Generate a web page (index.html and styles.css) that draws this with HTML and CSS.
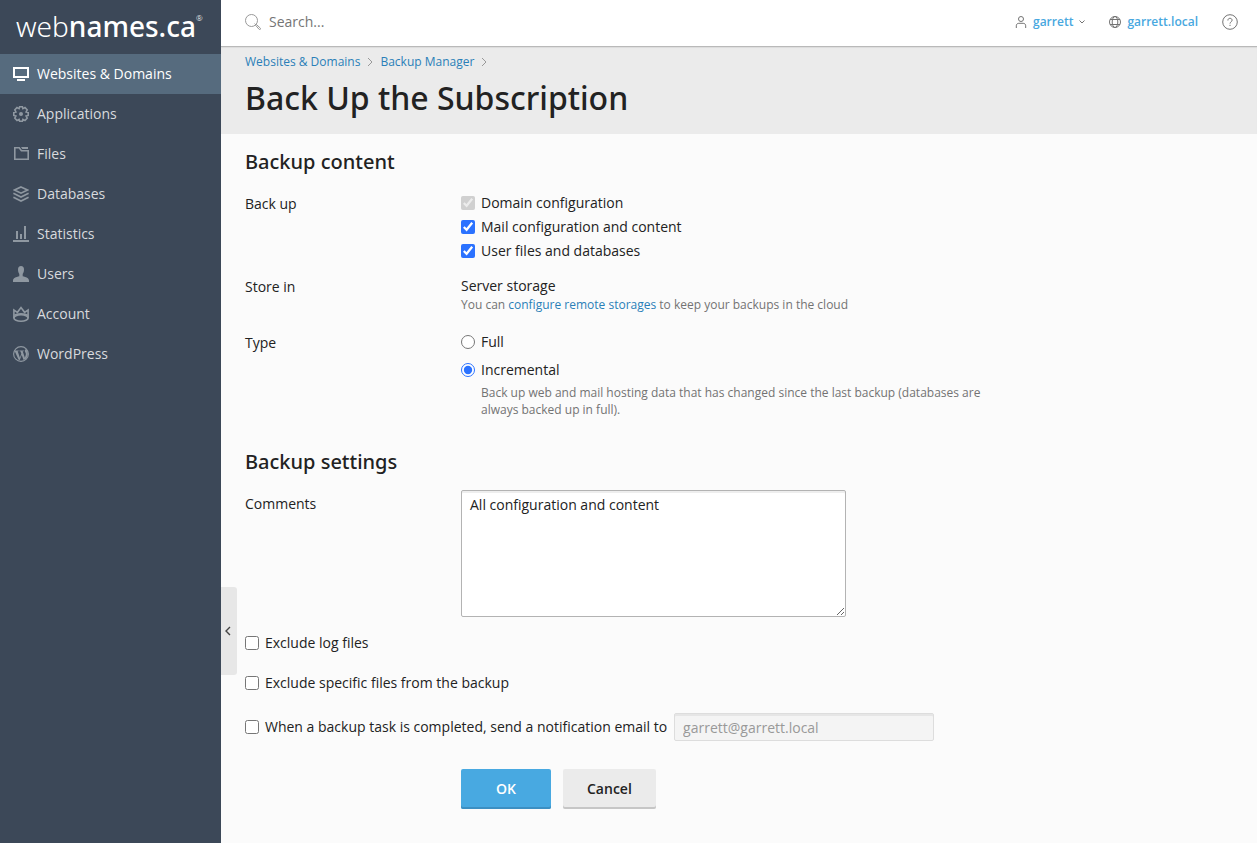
FILE: index.html
```
<!DOCTYPE html>
<html lang="en">
<head>
    <meta charset="UTF-8">
    <meta name="viewport" content="width=device-width, initial-scale=1.0">
    <title>Back Up the Subscription</title>
    <link rel="stylesheet" href="styles.css">
</head>
<body>

    <aside class="sidebar">
        <a class="logo" href="#">web<b>names.ca</b><sup>®</sup></a>
        <nav class="menu">
            <a class="menu-item active" href="#">
                <svg viewBox="0 0 16 16"><path d="M1 2h14v9H1z" fill="none" stroke="currentColor" stroke-width="2"/><path d="M4 13h8v2H4z"/></svg>
                Websites &amp; Domains
            </a>
            <a class="menu-item" href="#">
                <svg viewBox="0 0 16 16"><path d="M6.600.8h2.800l.5 1.900 2.100-1.100 2.200 2.200-1.100 2.200 2.100.6v2.800l-2.100.6 1.100 2.200-2.200 2.200-2.100-1.100-.5 1.900H6.600l-.5-1.900L4 14.400l-2.200-2.200L2.900 10 .8 9.400V6.600L2.900 6 1.800 3.800 4 1.600l2.100 1.100z" fill="none" stroke="currentColor" stroke-width="1.600"/><circle cx="8" cy="8" r="2"/></svg>
                Applications
            </a>
            <a class="menu-item" href="#">
                <svg viewBox="0 0 16 16"><path d="M1.800 1.800h4.400l2.200 3h6.800v8.400H1.800z" fill="none" stroke="currentColor" stroke-width="1.600"/><path d="M8 1h7v2H9.400z"/></svg>
                Files
            </a>
            <a class="menu-item" href="#">
                <svg viewBox="0 0 16 16" fill="none" stroke="currentColor" stroke-width="1.600"><path d="M8 1l6.500 3L8 7.200 1.500 4z"/><path d="M.4 7.300L8 11l7.600-3.700M.4 11.200L8 15l7.600-3.800"/></svg>
                Databases
            </a>
            <a class="menu-item" href="#">
                <svg viewBox="0 0 16 16"><path d="M0 14h16v2H0zM3 5h2v8H3zM7 8h2v5H7zM11 0h2v13h-2z"/></svg>
                Statistics
            </a>
            <a class="menu-item" href="#">
                <svg viewBox="0 0 16 16"><path d="M8 0c2 0 3 1.400 3 3.500 0 1.900-.5 3.400-1.300 4.400v2.300c3.300.8 6.300 1.900 6.300 4.300V16H0v-1.500c0-2.400 3-3.500 6.300-4.300V7.900C5.500 6.900 5 5.400 5 3.500 5 1.400 6 0 8 0z"/></svg>
                Users
            </a>
            <a class="menu-item" href="#">
                <svg viewBox="0 0 16 16" fill="none" stroke="currentColor" stroke-width="1.600"><path d="M.9 12.300V4l3.500 2.300L8 1.500l3.600 4.800L15.100 4v8.300"/><ellipse cx="8" cy="12" rx="7.100" ry="3.200"/><path d="M1 9.400c3-2 11-2 14 0"/></svg>
                Account
            </a>
            <a class="menu-item" href="#">
                <svg viewBox="0 0 16 16"><circle cx="8" cy="8" r="7.400" fill="none" stroke="currentColor" stroke-width="1.100"/><path d="M1.400 4.500h4.300v.8h-1l2.200 6.400 1.400-4-.9-2.400h-.9v-.8h4.400v.8h-1.200l2.200 6.400.9-2.900c.6-2-1.300-2.700-1-4.300.1-.8.800-1.300 1.600-1.200 2 2.700 2 6.700-.1 9.200L10.600 14 8.700 8.900 6.800 14l-1.200-.2z"/></svg>
                WordPress
            </a>
        </nav>
    </aside>

    <div class="page">
        <header class="topbar">
            <form class="search" role="search">
                <label for="search" aria-label="Search"><svg viewBox="0 0 16 16" fill="none" stroke="currentColor"><circle cx="6.500" cy="6.500" r="6"/><path d="M10.500 11.200l.8-.8 4 3.700c.8.9-.3 2-1.200 1.200zM11 11l-1.400-1.400"/></svg></label>
                <input type="text" id="search" placeholder="Search...">
            </form>
            <div class="account">
                <a class="account-link user" href="#">
                    <svg viewBox="0 0 12 12" fill="none" stroke="currentColor"><circle cx="6" cy="3" r="2.500"/><path d="M1.300 12V9.800c0-1.500 1-2.500 2.500-2.500h4.400c1.500 0 2.500 1 2.500 2.500V12"/></svg>
                    garrett
                    <svg class="caret" viewBox="0 0 6 6" fill="none" stroke="currentColor"><path d="M.5 1.500L3 4l2.500-2.500"/></svg>
                </a>
                <a class="account-link" href="#">
                    <svg viewBox="0 0 12 12" fill="none" stroke="currentColor"><circle cx="6" cy="6" r="5.500"/><ellipse cx="6" cy="6" rx="2.800" ry="5.500"/><path d="M1 3.500h10M1 8.500h10"/></svg>
                    garrett.local
                </a>
                <button class="help" type="button" aria-label="Help"><svg viewBox="0 0 16 16" fill="none" stroke="currentColor"><circle cx="8" cy="8" r="7.300"/><path d="M5.900 6.500c0-1.500.9-2.200 2.100-2.200s2.100.8 2.100 1.900C10.100 7.800 8 7.900 8 9.600M8 10.800V12"/></svg></button>
            </div>
        </header>

        <div class="heading">
            <nav class="breadcrumbs">
                <a href="#">Websites &amp; Domains</a>
                <svg viewBox="0 0 6 10"><path d="M1 1l4 4-4 4"/></svg>
                <a href="#">Backup Manager</a>
                <svg viewBox="0 0 6 10"><path d="M1 1l4 4-4 4"/></svg>
            </nav>
            <h1>Back Up the Subscription</h1>
        </div>

        <main>
            <form class="backup-form">
                <section>
                    <h2>Backup content</h2>
                    <div class="row" role="group" aria-labelledby="backUpLabel">
                        <span class="row-label" id="backUpLabel">Back up</span>
                        <div class="options">
                            <label class="option"><input type="checkbox" checked disabled>Domain configuration</label>
                            <label class="option"><input type="checkbox" checked>Mail configuration and content</label>
                            <label class="option"><input type="checkbox" checked>User files and databases</label>
                        </div>
                    </div>
                    <div class="row">
                        <span class="row-label">Store in</span>
                        <div>
                            <div>Server storage</div>
                            <p class="hint">You can <a href="#">configure remote storages</a> to keep your backups in the cloud</p>
                        </div>
                    </div>
                    <div class="row" role="radiogroup" aria-labelledby="typeLabel">
                        <span class="row-label" id="typeLabel">Type</span>
                        <div class="options types">
                            <label class="option"><input type="radio" name="type" value="full">Full</label>
                            <label class="option"><input type="radio" name="type" value="incremental" checked>Incremental</label>
                            <p class="hint">Back up web and mail hosting data that has changed since the last backup (databases are always backed up in full).</p>
                        </div>
                    </div>
                </section>

                <section>
                    <h2>Backup settings</h2>
                    <div class="row">
                        <label class="row-label" for="comments">Comments</label>
                        <textarea id="comments" name="comments">All configuration and content</textarea>
                    </div>
                    <label class="option"><input type="checkbox" name="excludeLogs">Exclude log files</label>
                    <label class="option"><input type="checkbox" name="excludeFiles">Exclude specific files from the backup</label>
                    <div class="notify">
                        <label class="option"><input type="checkbox" name="notify">When a backup task is completed, send a notification email to</label>
                        <input class="email" type="email" name="email" value="garrett@garrett.local" aria-label="Notification email" disabled>
                    </div>
                </section>

                <div class="buttons">
                    <button class="btn btn-primary" type="submit">OK</button>
                    <button class="btn" type="button">Cancel</button>
                </div>
            </form>
        </main>

        <button class="collapse" type="button" aria-label="Hide sidebar"><svg viewBox="0 0 6 10"><path d="M5 1L1 5l4 4"/></svg></button>
    </div>

</body>
</html>
```
FILE: styles.css
```
* {
    box-sizing: border-box;
}
body {
    display: flex;
    min-height: 100vh;
    margin: 0;
    background-color: #fbfbfb;
    color: #222;
    font-family: "Open Sans", "Liberation Sans", sans-serif;
    font-size: 14px;
    line-height: 20px;
}
a {
    color: #2a7fb8;
    text-decoration: none;
}
h1, h2, p {
    margin: 0;
}
h1, h2 {
    font-family: "Noto Sans", "Open Sans", sans-serif;
    font-weight: 500;
}
svg {
    flex: none;
    fill: currentColor;
}
svg[fill="none"] {
    fill: none;
}
input, textarea, button {
    font: inherit;
}
button {
    border: none;
    cursor: pointer;
}

/* Sidebar */
.sidebar {
    flex: none;
    width: 221px;
    background-color: #3c4858;
}
.logo {
    display: flex;
    height: 54px;
    padding-left: 16px;
    color: #fff;
    font-family: "Noto Sans", "Open Sans", sans-serif;
    font-size: 28px;
    font-weight: 300;
    line-height: 52px;
}
.logo b {
    font-weight: 500;
}
.logo sup {
    font-size: 8px;
    line-height: 36px;
}
.menu-item {
    display: flex;
    align-items: center;
    gap: 8px;
    height: 40px;
    padding: 0 13px;
    color: #d8dadd;
}
.menu-item svg {
    width: 16px;
    height: 16px;
    color: #8f98a1;
}
.menu-item.active {
    background-color: #566b7e;
    color: #fff;
}
.menu-item.active svg {
    color: #fff;
}

/* Top bar */
.page {
    position: relative;
    flex: 1;
    min-width: 0;
}
.topbar {
    display: flex;
    justify-content: space-between;
    height: 47px;
    padding: 0 19px 3px 24px;
    border-bottom: 1px solid #b9b9b9;
    background-color: #fff;
}
.search {
    display: flex;
    flex: 1;
    align-items: center;
    gap: 8px;
}
.search label {
    display: flex;
    color: #999;
}
.search svg {
    width: 16px;
    height: 16px;
}
.search input {
    flex: 1;
    padding: 0;
    border: none;
    outline: none;
    background: none;
}
.search input::placeholder {
    color: #757575;
}
.account {
    display: flex;
    align-items: center;
    gap: 24px;
}
.account-link {
    display: flex;
    align-items: center;
    gap: 6px;
    color: #48a8e0;
    font-size: 12px;
    font-weight: 600;
}
.account-link svg {
    width: 12px;
    height: 12px;
    color: #737373;
}
.account-link .caret {
    width: 6px;
    height: 6px;
}
.help {
    display: flex;
    padding: 0;
    background: none;
    color: #737373;
}
.help svg {
    width: 16px;
    height: 16px;
}

/* Heading */
.heading {
    height: 87px;
    padding: 5px 24px 0;
    background-color: #ebebeb;
    box-shadow: inset 0 1px 1px #dcdcdc;
}
.breadcrumbs {
    display: flex;
    align-items: center;
    gap: 7px;
    font-size: 12px;
}
.breadcrumbs svg {
    width: 6px;
    height: 10px;
    fill: none;
    stroke: #999;
}
h1 {
    margin-top: 4px;
    font-size: 32px;
    line-height: 44px;
}

/* Form */
main {
    padding: 14px 24px 24px;
}
section {
    margin-bottom: 26px;
}
h2 {
    margin-bottom: 14px;
    font-size: 20px;
    line-height: 28px;
}
.row {
    display: flex;
    margin-bottom: 12px;
}
.row-label {
    flex: none;
    width: 216px;
    padding-top: 4px;
}
.row > div {
    padding-top: 3px;
}
.options {
    display: flex;
    flex-direction: column;
    gap: 4px;
}
.types {
    gap: 8px;
    max-width: 540px;
}
.hint {
    margin-bottom: 4px;
    color: #737373;
    font-size: 12px;
    line-height: 17px;
}
.types .hint {
    margin-top: -4px;
    padding-left: 20px;
}
.option {
    display: flex;
    align-items: center;
    gap: 6px;
}
.option input {
    flex: none;
    width: 14px;
    height: 14px;
    margin: 0;
    accent-color: #2b72ff;
}
section > .option {
    margin-bottom: 20px;
}
textarea {
    width: 385px;
    height: 127px;
    margin-bottom: 4px;
    padding: 4px 8px;
    border: 1px solid #b3b3b3;
    border-radius: 2px;
    box-shadow: inset 0 2px 0 #eee;
    background-color: #fff;
    color: #222;
}
.notify {
    display: flex;
    align-items: center;
    gap: 7px;
}
.email {
    width: 260px;
    height: 28px;
    padding: 0 8px;
    border: 1px solid #ddd;
    border-radius: 2px;
    box-shadow: inset 0 2px 0 #e6e6e6;
    background-color: #f4f4f4;
    color: #999;
}
.buttons {
    display: flex;
    gap: 12px;
    padding: 2px 0 0 216px;
}
.btn {
    min-width: 90px;
    height: 40px;
    padding: 0 24px;
    border-radius: 2px;
    box-shadow: inset 0 -2px 0 #c6c6c6;
    background-color: #ebebeb;
    color: #222;
    font-weight: 600;
}
.btn-primary {
    box-shadow: inset 0 -2px 0 #3c8fc2;
    background-color: #48a9e1;
    color: #fff;
}

/* Sidebar toggle, floats over the page edge */
.collapse {
    position: absolute;
    bottom: 168px;
    left: 0;
    display: flex;
    align-items: center;
    width: 16px;
    height: 88px;
    padding: 0 4px;
    border-radius: 0 3px 3px 0;
    background-color: #e7e7e7;
    color: #444;
}
.collapse svg {
    width: 6px;
    height: 10px;
    fill: none;
    stroke: currentColor;
    stroke-width: 1.4;
}
```
